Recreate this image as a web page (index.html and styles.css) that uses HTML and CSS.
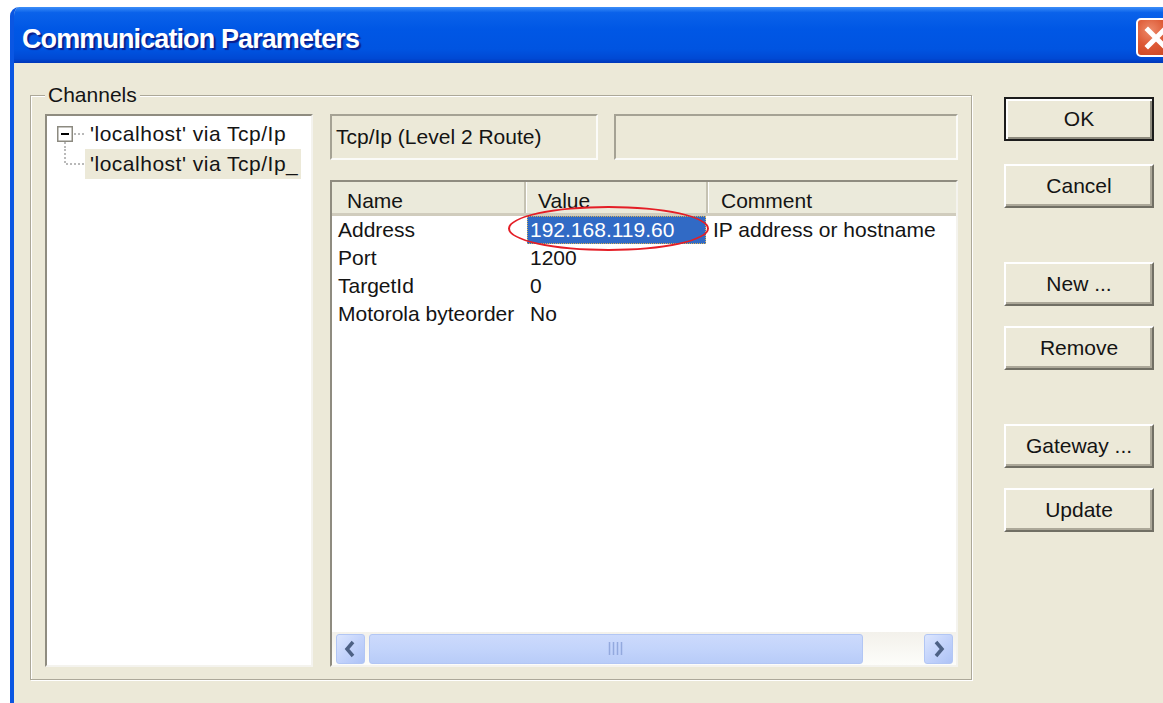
FILE: index.html
```html
<!DOCTYPE html>
<html lang="en">
<head>
<meta charset="utf-8">
<title>Communication Parameters</title>
<link rel="stylesheet" href="styles.css">
</head>
<body>
<div class="window">
  <div class="titlebar">
    <span class="title">Communication Parameters</span>
    <span class="close">
      <svg width="35" height="35" viewBox="0 0 35 35"><path d="M10 10 L26 26 M26 10 L10 26" stroke="#fff" stroke-width="5" stroke-linecap="square" fill="none"/></svg>
    </span>
  </div>
  <div class="client">
    <fieldset class="group">
      <legend>Channels</legend>
      <div class="group-body">
        <div class="tree">
          <div class="tree-row">
            <svg class="gutter" width="29" height="30" viewBox="0 0 29 30">
              <rect x="1.75" y="7.75" width="14.5" height="14.5" fill="#fff" stroke="#8C8A80" stroke-width="1.5"/>
              <path d="M5 15 H13" stroke="#000" stroke-width="2"/>
              <path d="M18 15 H29 M9 23 V30" stroke="#A3A3A3" stroke-width="1.5" stroke-dasharray="2 2"/>
            </svg>
            <span class="tree-label">'localhost' via Tcp/Ip</span>
          </div>
          <div class="tree-row">
            <svg class="gutter" width="29" height="30" viewBox="0 0 29 30">
              <path d="M9 0 V15 H29" stroke="#A3A3A3" stroke-width="1.5" stroke-dasharray="2 2" fill="none"/>
            </svg>
            <span class="tree-label selected">'localhost' via Tcp/Ip_</span>
          </div>
        </div>
        <div class="detail">
          <div class="info-row">
            <div class="static route">Tcp/Ip (Level 2 Route)</div>
            <div class="static blank"></div>
          </div>
          <div class="listview">
            <div class="lv-header">
              <div class="hcell col-name">Name</div>
              <div class="hcell col-value">Value</div>
              <div class="hcell col-comment">Comment</div>
            </div>
            <div class="lv-rows">
              <div class="lv-row">
                <div class="cell col-name">Address</div>
                <div class="cell col-value"><span class="sel">192.168.119.60</span></div>
                <div class="cell col-comment">IP address or hostname</div>
              </div>
              <div class="lv-row">
                <div class="cell col-name">Port</div>
                <div class="cell col-value">1200</div>
                <div class="cell col-comment"></div>
              </div>
              <div class="lv-row">
                <div class="cell col-name">TargetId</div>
                <div class="cell col-value">0</div>
                <div class="cell col-comment"></div>
              </div>
              <div class="lv-row">
                <div class="cell col-name">Motorola byteorder</div>
                <div class="cell col-value">No</div>
                <div class="cell col-comment"></div>
              </div>
            </div>
            <div class="hscroll">
              <span class="sb-btn">
                <svg width="27" height="28" viewBox="0 0 27 28"><polyline points="16,7 10,14 16,21" fill="none" stroke="#4D6185" stroke-width="3.5"/></svg>
              </span>
              <span class="sb-thumb">
                <svg width="16" height="13" viewBox="0 0 16 13"><path d="M1.5 0 V13 M5.5 0 V13 M9.5 0 V13 M13.5 0 V13" stroke="#93A9DE" stroke-width="1.5"/></svg>
              </span>
              <span class="sb-btn right">
                <svg width="27" height="28" viewBox="0 0 27 28"><polyline points="11,7 17,14 11,21" fill="none" stroke="#4D6185" stroke-width="3.5"/></svg>
              </span>
            </div>
            <div class="marker"></div>
          </div>
        </div>
      </div>
    </fieldset>
    <div class="buttons">
      <div class="btn default">OK</div>
      <div class="btn after-ok">Cancel</div>
      <div class="btn gap-lg">New ...</div>
      <div class="btn gap-sm">Remove</div>
      <div class="btn gap-lg">Gateway ...</div>
      <div class="btn gap-sm">Update</div>
    </div>
  </div>
</div>
</body>
</html>
```

FILE: styles.css
```css
* {
  box-sizing: border-box;
}

html,
body {
  margin: 0;
  height: 100%;
}

body {
  background: #fff;
  overflow: hidden;
  font-family: "Liberation Sans", Arial, sans-serif;
  font-size: 21px;
  color: #141414;
}

/* window frame */
.window {
  margin: 7px 0 0 10px;
  width: 1180px;
  height: 720px;
  border-left: 4px solid #0A56E2;
  border-top-left-radius: 9px;
  overflow: hidden;
  display: flex;
  flex-direction: column;
  background: #ECE9D8;
}

.titlebar {
  height: 56px;
  flex: none;
  display: flex;
  align-items: flex-start;
  padding: 0 15px 0 8px;
  background: linear-gradient(to bottom,
      #3C8EF8 0%,
      #0A62EA 10%,
      #0057E5 40%,
      #0054E1 75%,
      #0049D4 92%,
      #0036B8 100%);
}

.title {
  margin-top: 17px;
  font-weight: bold;
  font-size: 27px;
  letter-spacing: -0.9px;
  line-height: 30px;
  color: #fff;
  text-shadow: 2px 2px 1px #0B1E8C;
  white-space: nowrap;
}

.close {
  margin-left: auto;
  margin-top: 11px;
  width: 39px;
  height: 39px;
  border: 2px solid #fff;
  border-radius: 5px;
  background: radial-gradient(circle at 35% 30%, #EE8B6B 0%, #DD5A36 45%, #C8401D 100%);
  display: flex;
  align-items: center;
  justify-content: center;
}

/* dialog client area */
.client {
  flex: 1;
  display: flex;
  align-items: flex-start;
  padding: 18px 0 0 16px;
}

.group {
  margin: 0;
  width: 942px;
  min-width: 0;
  padding: 5px 13px 12px 14px;
  border: 1px solid #ACA899;
  box-shadow: inset 1px 1px 0 #fff, 1px 1px 0 #fff;
}

.group legend {
  padding: 0 3px;
  line-height: 28px;
  background: #ECE9D8;
}

.group-body {
  display: flex;
  gap: 17px;
}

/* channel tree */
.tree {
  width: 268px;
  height: 553px;
  background: #fff;
  border: 2px solid;
  border-color: #8F8C80 #F4F3EE #F4F3EE #8F8C80;
  padding: 3px 0 0 9px;
}

.tree-row {
  display: flex;
  height: 30px;
}

.gutter {
  flex: none;
}

.tree-label {
  padding: 0 3px 0 5px;
  line-height: 30px;
  letter-spacing: 0.5px;
  white-space: nowrap;
}

.tree-label.selected {
  background: #ECE9D8;
}

/* channel details */
.detail {
  width: 628px;
  display: flex;
  flex-direction: column;
  gap: 20px;
}

.info-row {
  display: flex;
  gap: 16px;
  height: 46px;
}

.static {
  border: 2px solid;
  border-color: #A5A294 #FBFBF8 #FBFBF8 #A5A294;
  padding-left: 4px;
  line-height: 42px;
  white-space: nowrap;
}

.static.route {
  width: 268px;
}

.static.blank {
  flex: 1;
}

.listview {
  flex: 1;
  position: relative;
  border: 2px solid;
  border-color: #8F8C80 #F4F3EE #F4F3EE #8F8C80;
  background: #fff;
  display: flex;
  flex-direction: column;
}

.lv-header {
  display: flex;
  height: 34px;
  flex: none;
  background: #EBEADB;
  border-bottom: 3px solid #D0CCBD;
}

.hcell {
  padding-top: 7px;
  line-height: 24px;
  white-space: nowrap;
}

.hcell.col-name {
  padding-left: 15px;
  border-right: 2px solid #C5C2B2;
}

.hcell.col-value {
  padding-left: 12px;
  border-right: 2px solid #C5C2B2;
  box-shadow: inset 1px 0 0 #fff;
}

.hcell.col-comment {
  padding-left: 13px;
  box-shadow: inset 1px 0 0 #fff;
}

.col-name {
  width: 194px;
  flex: none;
}

.col-value {
  width: 182px;
  flex: none;
}

.col-comment {
  flex: 1;
}

.lv-rows {
  flex: 1;
}

.lv-row {
  display: flex;
  height: 28px;
  line-height: 28px;
  white-space: nowrap;
}

.cell.col-name {
  padding-left: 6px;
}

.cell.col-value {
  padding-left: 4px;
}

.cell.col-comment {
  padding-left: 5px;
}

.sel {
  display: block;
  margin-left: -3px;
  width: 179px;
  padding-left: 3px;
  background: #316AC5;
  color: #fff;
  outline: 1px dotted #D8B25A;
  outline-offset: -1px;
}

/* hand-drawn highlight around the address */
.marker {
  position: absolute;
  left: 176px;
  top: 24px;
  width: 201px;
  height: 45px;
  border: 2px solid #E41E26;
  border-radius: 50%;
  pointer-events: none;
}

/* horizontal scrollbar */
.hscroll {
  height: 33px;
  flex: none;
  display: flex;
  align-items: center;
  padding: 0 3px 0 4px;
  background: linear-gradient(to bottom, #F3F1EB, #FDFDFA);
}

.sb-btn {
  width: 29px;
  height: 30px;
  border: 1px solid #B2C6F4;
  border-radius: 3px;
  background: linear-gradient(135deg, #DCE6FE 0%, #C3D3FB 50%, #AEC3F6 100%);
  display: flex;
  align-items: center;
  justify-content: center;
}

.sb-btn.right {
  margin-left: auto;
}

.sb-thumb {
  margin-left: 4px;
  width: 494px;
  height: 30px;
  border: 1px solid #B2C6F4;
  border-radius: 3px;
  background: linear-gradient(to bottom, #CCDAFC 0%, #C3D4FB 50%, #B8CCF8 100%);
  display: flex;
  align-items: center;
  justify-content: center;
}

/* command buttons */
.buttons {
  width: 150px;
  margin: 16px 0 0 32px;
  display: flex;
  flex-direction: column;
}

.btn {
  height: 44px;
  border: 2px solid;
  border-color: #FFFFFF #716F64 #716F64 #FFFFFF;
  box-shadow: inset -2px -2px 0 #ACA899;
  background: #ECE9D8;
  text-align: center;
  line-height: 39px;
  white-space: nowrap;
}

.btn.default {
  border-color: #1C1C1C;
  box-shadow: inset 2px 2px 0 #fff, inset -2px -2px 0 #8E8B7E;
}

.btn.after-ok {
  margin-top: 23px;
}

.btn.gap-lg {
  margin-top: 54px;
}

.btn.gap-sm {
  margin-top: 20px;
}
```
